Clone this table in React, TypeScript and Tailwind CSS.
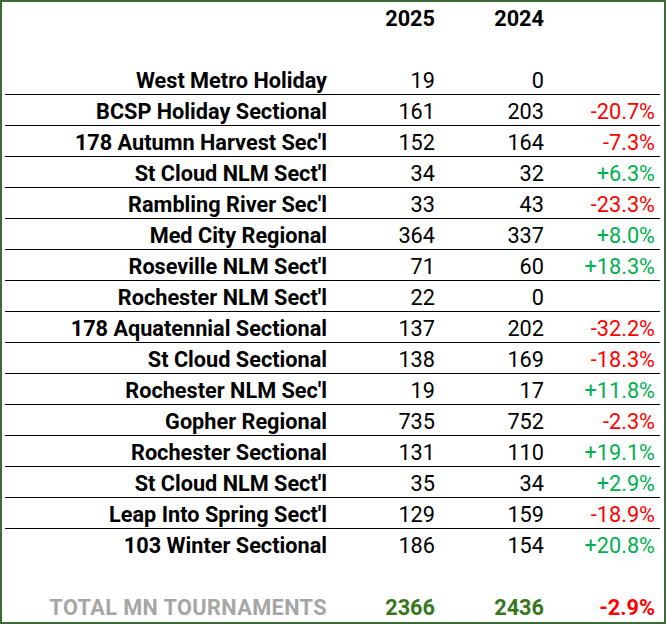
import React from "react";

type Row = { name: string; y25: number; y24: number; pct?: string };

const rows: Row[] = [
  { name: "West Metro Holiday", y25: 19, y24: 0 },
  { name: "BCSP Holiday Sectional", y25: 161, y24: 203, pct: "-20.7%" },
  { name: "178 Autumn Harvest Sec'l", y25: 152, y24: 164, pct: "-7.3%" },
  { name: "St Cloud NLM Sect'l", y25: 34, y24: 32, pct: "+6.3%" },
  { name: "Rambling River Sec'l", y25: 33, y24: 43, pct: "-23.3%" },
  { name: "Med City Regional", y25: 364, y24: 337, pct: "+8.0%" },
  { name: "Roseville NLM Sect'l", y25: 71, y24: 60, pct: "+18.3%" },
  { name: "Rochester NLM Sect'l", y25: 22, y24: 0 },
  { name: "178 Aquatennial Sectional", y25: 137, y24: 202, pct: "-32.2%" },
  { name: "St Cloud Sectional", y25: 138, y24: 169, pct: "-18.3%" },
  { name: "Rochester NLM Sec'l", y25: 19, y24: 17, pct: "+11.8%" },
  { name: "Gopher Regional", y25: 735, y24: 752, pct: "-2.3%" },
  { name: "Rochester Sectional", y25: 131, y24: 110, pct: "+19.1%" },
  { name: "St Cloud NLM Sect'l", y25: 35, y24: 34, pct: "+2.9%" },
  { name: "Leap Into Spring Sect'l", y25: 129, y24: 159, pct: "-18.9%" },
  { name: "103 Winter Sectional", y25: 186, y24: 154, pct: "+20.8%" },
];

const grid = "grid grid-cols-[327px_109px_109px_110px] h-[31px] items-center pt-[3px]";

export default function App() {
  return (
    <div className="w-[666px] h-[624px] bg-white border-2 border-[#3a6b34] font-['Roboto',sans-serif] text-[21.7px] text-black leading-none">
      <div className="ml-[3px] w-[655px]">
        <div className={`${grid} font-bold`}>
          <div />
          <div className="text-right pr-[6px]">2025</div>
          <div className="text-right pr-[6px]">2024</div>
          <div />
        </div>
        <div className="h-[31px]" />

        {rows.map((r, i) => (
          <div
            key={i}
            className={`${grid} ${i < rows.length - 1 ? "border-b border-black" : ""}`}
          >
            <div className="text-right pr-[5px] font-bold whitespace-nowrap">{r.name}</div>
            <div className="text-right pr-[6px]">{r.y25}</div>
            <div className="text-right pr-[6px]">{r.y24}</div>
            <div
              className={`text-right pr-[5px] ${
                r.pct?.startsWith("-") ? "text-[#ff0000]" : "text-[#00b050]"
              }`}
            >
              {r.pct}
            </div>
          </div>
        ))}

        <div className="h-[31px]" />
        <div className={`${grid} font-bold`}>
          <div className="text-right pr-[5px] text-[#a6a6a6] whitespace-nowrap tracking-[0.4px]">TOTAL MN TOURNAMENTS</div>
          <div className="text-right pr-[6px] text-[#38761d]">2366</div>
          <div className="text-right pr-[6px] text-[#38761d]">2436</div>
          <div className="text-right pr-[5px] text-[#ff0000]">-2.9%</div>
        </div>
      </div>
    </div>
  );
}
